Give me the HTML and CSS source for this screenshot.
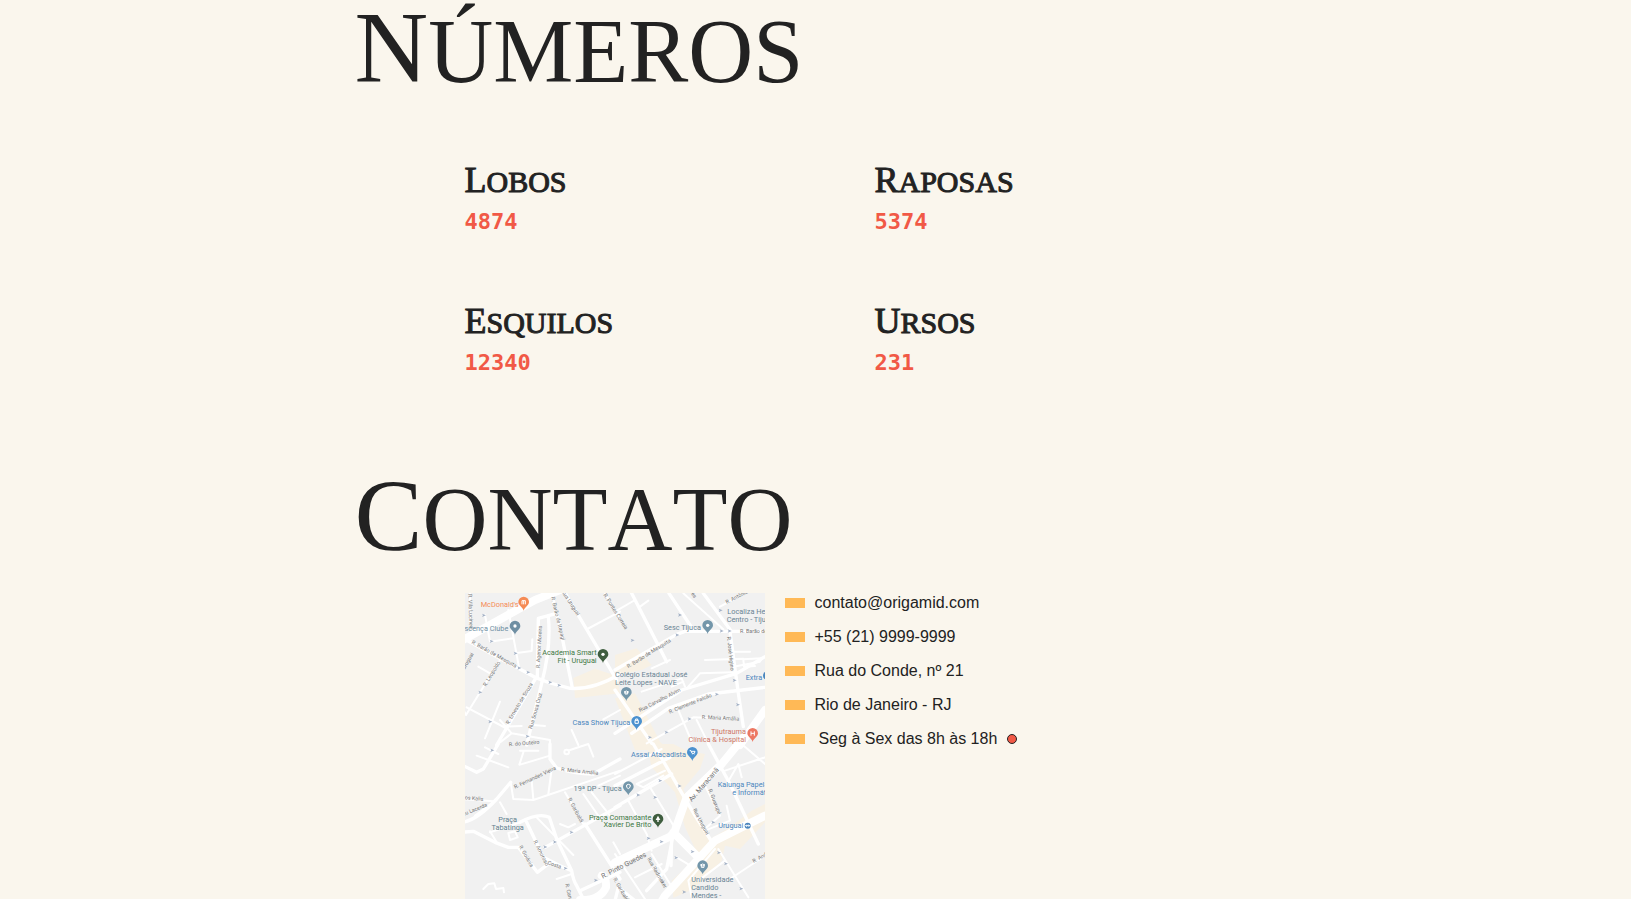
FILE: index.html
```
<!DOCTYPE html>
<html lang="pt-BR">
<head>
<meta charset="utf-8">
<title>Números e contato</title>
<link rel="stylesheet" href="styles.css">
</head>
<body>
<main class="page">
<section class="numeros">
<h1 class="titulo">Números</h1>
<div class="numeros-grid">
<div class="numero"><h2>Lobos</h2><span>4874</span></div>
<div class="numero"><h2>Raposas</h2><span>5374</span></div>
<div class="numero"><h2>Esquilos</h2><span>12340</span></div>
<div class="numero"><h2>Ursos</h2><span>231</span></div>
</div>
</section>
<section class="contato">
<h1 class="titulo">Contato</h1>
<div class="contato-grid">
<svg class="mapa" viewBox="0 0 900 918" role="img" aria-label="Mapa da Tijuca">
<defs>
<g id="pin"><path d="M0 20C-3 8-16 5-16-6A16 16 0 0 1 16-6C16 5 3 8 0 20Z"/></g>
<path id="seta" d="M-6-5 6 0-6 5-3 0Z"/>
</defs>
<rect width="900" height="918" fill="#f1f1f1"/>
<g class="comercio">
<path transform="translate(-15 -9)" d="M340 264 405 236 470 258 480 310 345 324Z"/>
<path transform="translate(450 -9)" d="M0 195 65 175 110 225 80 240 0 255ZM0 325 60 310 135 455 160 480 60 480Z"/>
<path transform="translate(450 453)" d="M95 0 175 0 215 20 270 30 255 75 205 135 235 215 285 285 345 250 410 200 450 180 450 235 375 315 330 305 320 350 240 432 175 462 170 410 250 335 210 250 180 145 110 70Z"/>
</g>
<g class="vias">
<g transform="translate(-15 -9)">
<path class="grande" d="M0 155 225 30 300 0"/>
<path class="media" d="M10 145 225 262 270 279 330 295Q400 300 480 252M310 0 470 270M230 260 110 465M232 262 235 85 290 70M272 0 300 110 337 294M265 80Q274 170 245 280L200 465"/>
<path d="M30 10V115M145 60 177 232M75 75 90 155 158 145M165 190 215 183 217 148M120 210 18 375 0 340M20 352 137 414M55 230 90 250M382 117 480 65M435 10 480 88M130 410 185 408M75 445 120 335M220 405 255 408M110 465 155 430 270 450V465M155 430 120 390M430 388 480 360M335 420 355 465"/>
</g>
<g transform="translate(450 -9)">
<path class="media" d="M0 240 185 133 210 124H450M45 0 155 215M162 10 235 120M265 10 350 125M345 125 370 310 385 410M0 430 200 300 365 250 450 200M50 430 160 355 280 312 450 292M0 300 110 460"/>
<path d="M0 65 60 30M75 50 100 32M205 10 325 118M315 50 380 15M110 235 165 210M270 210 385 206M350 185 405 185M355 230 435 215 440 205 385 208 387 230 420 228M80 305 200 265 210 290M220 290 255 250 355 247M190 360 230 455M95 460 235 382 370 388M245 390 280 460M170 290 205 275"/>
<path class="grande" d="M375 465 450 360"/>
</g>
<g transform="translate(-15 453)">
<path class="media" d="M0 60 50 85 70 75 115 0M270 0V45L290 72Q340 90 400 90L480 45M0 235Q45 235 110 165L152 115M0 265 40 262 105 295 145 310 175 310 232 385 265 360M180 235Q235 205 268 220L290 285 335 380Q340 410 350 425L370 465M200 235 250 340 300 365 335 380M375 240 480 405M255 310 480 185M360 440 480 385"/>
<path d="M50 35 145 70M75 10 115 30M180 62 270 35M190 25 178 62M180 20 235 20M152 115 160 165 220 168 480 80M215 110 220 165M265 150 275 75M0 165 100 172M45 215 100 175M120 175 140 210M90 262 110 295M90 265 180 235M145 267 165 262 173 280 150 288ZM230 220 340 333M315 145 370 240M370 150 425 230M395 145 450 215M300 240 325 250 345 240M290 405 335 390M460 295 480 330M330 18 385 0 400 38"/>
<path d="M70 435 85 420 103 418 108 435 130 432 132 445M415 125 480 95"/>
<circle cx="320" cy="24" r="7"/>
<path class="grande" d="M360 468Q420 470 438 430Q440 400 425 395"/>
</g>
<g transform="translate(450 453)">
<path class="grande" d="M390-25 320 60 215 160 178 265 165 278 0 355M450 215 300 290 150 455 135 480M175 265 250 340"/>
<path class="media" d="M115 0 205 155 240 215 295 300M0 190 170 90M175 270 155 375 95 440M170 280 168 365M280 0 345 120 430 300M0 125 165 40M0 470 10 430 60 470"/>
<path d="M0 90 140 15M65 120 85 130 145 95M65 120 150 80M105 130 185 260M40 170 95 270 110 320M110 330 165 420M60 400 140 360M185 340 235 370M310 315 375 420 400 460M250 410 330 350M345 405 450 335M0 330 90 465M380 0 450 60M330 80 450 40M335 120 370 60 380 100M335 185 345 230 270 260M265 115 315 215 275 250M300 315 220 410 230 460"/>
</g>
</g>
<g class="ruas">
<g transform="translate(-15 -9)">
<text transform="translate(25 12) rotate(88)">R. Vila Lucinea</text><text transform="translate(34 160) rotate(29)">R. Barão de Mesquita</text><text transform="translate(273 22) rotate(76)">R. Barão de Itapagi</text><text transform="translate(304 5) rotate(57)">Rua Uruguai</text><text transform="translate(430 15) rotate(58)">R. Pontes Correia</text><text transform="translate(239 235) rotate(-87)">R. Agenor Moreira</text><text transform="translate(78 290) rotate(-59)">R. Leopoldo</text><text transform="translate(146 404) rotate(-59)">R. Ernesto de Souza</text><text transform="translate(216 418) rotate(-74)">Rua Sousa Cruz</text><text transform="translate(147 469) rotate(-5)">R. do Outeiro</text><text transform="translate(14 240) rotate(-60)">Uruguai</text>
</g>
<g transform="translate(450 -9)">
<text transform="translate(40 235) rotate(-32)">R. Barão de Mesquita</text><text transform="translate(335 42) rotate(-27)">R. Antônio Basílio</text><text x="375" y="129">R. Barão de Mesquita</text><text transform="translate(336 140) rotate(84)">R. José Higino</text><text transform="translate(75 366) rotate(-27)">Rua Carvalho Alvim</text><text transform="translate(164 371) rotate(-22)">R. Clemente Falcão</text><text transform="translate(260 386) rotate(3)">R. Maria Amália</text><text transform="translate(222 0) rotate(60)">ules</text>
</g>
<g transform="translate(-15 453)">
<text transform="translate(165 134) rotate(-25)">R. Fernandes Vieira</text><text transform="translate(303 81) rotate(6)">R. Maria Amália</text><text transform="translate(14 166) rotate(5)">os Kalis</text><text transform="translate(10 216) rotate(-22)">eu Lacerda</text><text transform="translate(323 165) rotate(62)">R. Garibaldi</text><text transform="translate(176 308) rotate(60)">R. Goiânia</text><text transform="translate(220 292) rotate(63)">R. Amoroso</text><text transform="translate(262 360) rotate(20)">Costa</text><text class="avenida" transform="translate(428 404) rotate(-27)">R. Pinto Guedes</text><text transform="translate(316 420) rotate(78)">R. Canuto</text><text transform="translate(459 405) rotate(60)">R. Garibaldi</text>
</g>
<g transform="translate(450 453)">
<text class="avenida" transform="translate(230 174) rotate(-49)">Av. Maracanã</text><text transform="translate(280 137) rotate(69)">R. Guaxupé</text><text transform="translate(233 197) rotate(62)">Rua Uruguai</text><text transform="translate(96 344) rotate(60)">Rua Radmaker</text><text transform="translate(416 357) rotate(-29)">R. Andrade Neves</text>
</g>
</g>
<g class="setas">
<use href="#seta" x="57" y="67"/><use href="#seta" x="80" y="145"/><use href="#seta" x="152" y="181"/><use href="#seta" x="163" y="225"/><use href="#seta" x="190" y="238"/><use href="#seta" x="256" y="268"/><use href="#seta" x="283" y="277"/><use href="#seta" x="46" y="298"/><use href="#seta" x="76" y="386"/><use href="#seta" x="188" y="430"/><use href="#seta" x="503" y="142"/><use href="#seta" x="645" y="66"/><use href="#seta" x="637" y="126"/><use href="#seta" x="767" y="52"/><use href="#seta" x="770" y="114"/><use href="#seta" x="794" y="114"/><use href="#seta" x="809" y="262"/><use href="#seta" x="756" y="304"/><use href="#seta" x="819" y="335"/><use href="#seta" x="674" y="378"/><use href="#seta" x="605" y="418"/><use href="#seta" x="555" y="433"/><use href="#seta" x="82" y="472"/><use href="#seta" x="241" y="762"/><use href="#seta" x="270" y="747"/><use href="#seta" x="320" y="718"/><use href="#seta" x="302" y="826"/><use href="#seta" x="393" y="862"/><use href="#seta" x="586" y="563"/><use href="#seta" x="644" y="579"/><use href="#seta" x="520" y="606"/><use href="#seta" x="571" y="613"/><use href="#seta" x="551" y="736"/><use href="#seta" x="590" y="746"/><use href="#seta" x="683" y="776"/><use href="#seta" x="634" y="794"/><use href="#seta" x="745" y="688"/><use href="#seta" x="762" y="779"/><use href="#seta" x="783" y="812"/><use href="#seta" x="829" y="887"/><use href="#seta" x="658" y="897"/>
</g>
<g class="locais">
<g transform="translate(-15 -9)">
<g fill="#f58b55"><text x="62" y="51">McDonald's</text><use href="#pin" x="191" y="42"/></g>
<path class="icone" d="M186 43V32H196V43M191 32V43"/>
<g fill="#6f8fa3"><text x="145" y="122" text-anchor="end">Renascença Clube</text><use href="#pin" x="165" y="114"/></g><circle cx="165" cy="108" r="5" fill="#fff"/>
<g fill="#3f7845"><text x="410" y="196" text-anchor="end">Academia Smart</text><text x="410" y="219" text-anchor="end">Fit - Uruguai</text></g><use href="#pin" x="429" y="199" fill="#3e5d3e"/><circle cx="429" cy="193" r="5" fill="#fff"/>
</g>
<g transform="translate(450 -9)" fill="#6a8494">
<text x="258" y="119" text-anchor="end">Sesc Tijuca</text><use href="#pin" x="278" y="112" fill="#7396aa"/><circle cx="278" cy="106" r="5" fill="#fff"/>
<text x="337" y="72">Localiza Hertz</text><text x="335" y="96">Centro - Tijuca</text><text x="0" y="262">Colégio Estadual José</text><text x="0" y="285">Leite Lopes - NAVE</text><use href="#pin" x="34" y="313" fill="#7396aa"/><path class="icone" d="M27 306 34 303 41 306 34 309ZM30 309V312H38V309"/>
<g fill="#4b86bd"><text x="392" y="270">Extra</text><circle cx="457" cy="257" r="13"/><text x="46" y="406" text-anchor="end">Casa Show Tijuca</text></g><use href="#pin" x="65" y="400" fill="#4b91cf"/><path class="icone" d="M60 391H70V400H60ZM62 391V387H68V391"/>
<g fill="#cf7767"><text x="393" y="433" text-anchor="end">Tijutrauma</text><text x="393" y="457" text-anchor="end">Clínica &amp; Hospital</text></g><use href="#pin" x="413" y="436" fill="#ed7863"/><path class="icone" d="M408 424V437M418 424V437M408 430H418"/>
</g>
<g transform="translate(-15 453)">
<g fill="#627f8e"><text x="143" y="234" text-anchor="middle">Praça</text><text x="143" y="257" text-anchor="middle">Tabatinga</text><text x="485" y="140" text-anchor="end">19ª DP - Tijuca</text></g>
</g>
<g transform="translate(450 453)">
<g fill="#4b86bd"><text x="213" y="39" text-anchor="end">Assaí Atacadista</text><text x="308" y="129">Kalunga Papelaria</text><text x="352" y="152">e Informática</text><text x="385" y="252" text-anchor="end">Uruguai</text><circle cx="398" cy="245" r="9"/></g>
<path class="icone" d="M392 245H404M395 242 392 245 395 248M401 242 404 245 401 248"/>
<use href="#pin" x="232" y="31" fill="#4b91cf"/><path class="icone" d="M224 20H228L231 28H238L240 22H229M232 31V32M238 31V32"/>
<use href="#pin" x="40" y="134" fill="#7396aa"/><path class="icone" d="M35 123 40 121 46 123 45 130 40 134 35 130Z"/>
<g fill="#3f7845"><text x="109" y="227" text-anchor="end">Praça Comandante</text><text x="109" y="250" text-anchor="end">Xavier De Brito</text></g><use href="#pin" x="129" y="231" fill="#3e5d3e"/><path d="M129 215 136 228H131V234H127V228H122Z" fill="#fff"/>
<g fill="#6a8494"><text x="229" y="415">Universidade</text><text x="229" y="438">Candido</text><text x="229" y="461">Mendes -</text></g><use href="#pin" x="263" y="371" fill="#7396aa"/><path class="icone" d="M256 363 263 360 270 363 263 366ZM259 366V370H267V366"/>
</g>
</g>
</svg>
<ul class="dados">
<li>contato@origamid.com</li>
<li>+55 (21) 9999-9999</li>
<li>Rua do Conde, nº 21</li>
<li>Rio de Janeiro - RJ</li>
<li class="horario">Seg à Sex das 8h às 18h</li>
</ul>
</div>
</section>
</main>
</body>
</html>
```
FILE: styles.css
```
*, *::before, *::after { box-sizing: border-box; }

body {
  margin: 0;
  background: #faf6ed;
  color: #222;
  font-family: "Liberation Sans", Arial, sans-serif;
}

h1, h2, ul { margin: 0; padding: 0; font-weight: 400; }

.page { max-width: 922px; margin: 0 auto; }

.titulo {
  font-family: "Liberation Serif", serif;
  font-size: 90px;
  line-height: 103px;
  text-transform: uppercase;
  font-kerning: none;
}
.titulo::first-letter { font-size: 102px; line-height: 80px; }

.numeros { padding-bottom: 91px; }
.numeros-grid {
  display: grid;
  grid-template-columns: 1fr 1fr;
  gap: 67px 8px;
  padding: 59px 0 0 110px;
}
.numero { display: grid; gap: 6px; }
.numero h2 {
  font-family: "Liberation Serif", serif;
  font-size: 30px;
  line-height: 40px;
  text-transform: uppercase;
  -webkit-text-stroke: 1px #222;
}
.numero h2::first-letter { font-size: 36px; line-height: 30px; }
.numero span {
  font: bold 22px/28px "DejaVu Sans Mono", monospace;
  color: #f15946;
}

.contato-grid {
  display: grid;
  grid-template-columns: 300px 1fr;
  gap: 20px;
  align-items: start;
  padding: 22px 0 0 110px;
}
.mapa { display: block; width: 100%; }
.comercio { fill: #f8f1e4; }
.vias { fill: none; stroke: #fff; stroke-width: 6; stroke-linejoin: round; stroke-linecap: round; }
.vias .media { stroke-width: 10; }
.vias .grande { stroke-width: 24; }
.ruas { font: 16px Roboto, sans-serif; fill: #737373; }
.ruas .avenida { font-size: 21px; }
.setas { fill: #a3b1c6; }
.locais { font: 22px Roboto, sans-serif; }
.icone { fill: none; stroke: #fff; stroke-width: 3; }

.dados { list-style: none; display: grid; gap: 14px; }
.dados li { display: flex; align-items: center; gap: 10px; font-size: 16px; line-height: 20px; }
.dados li::before { content: ""; width: 20px; height: 10px; background: #ffb956; }
.dados .horario::before { margin-right: 4px; }
.dados .horario::after {
  content: "";
  width: 10px;
  height: 10px;
  border: 1px solid #222;
  border-radius: 50%;
  background: #f15946;
}
```
